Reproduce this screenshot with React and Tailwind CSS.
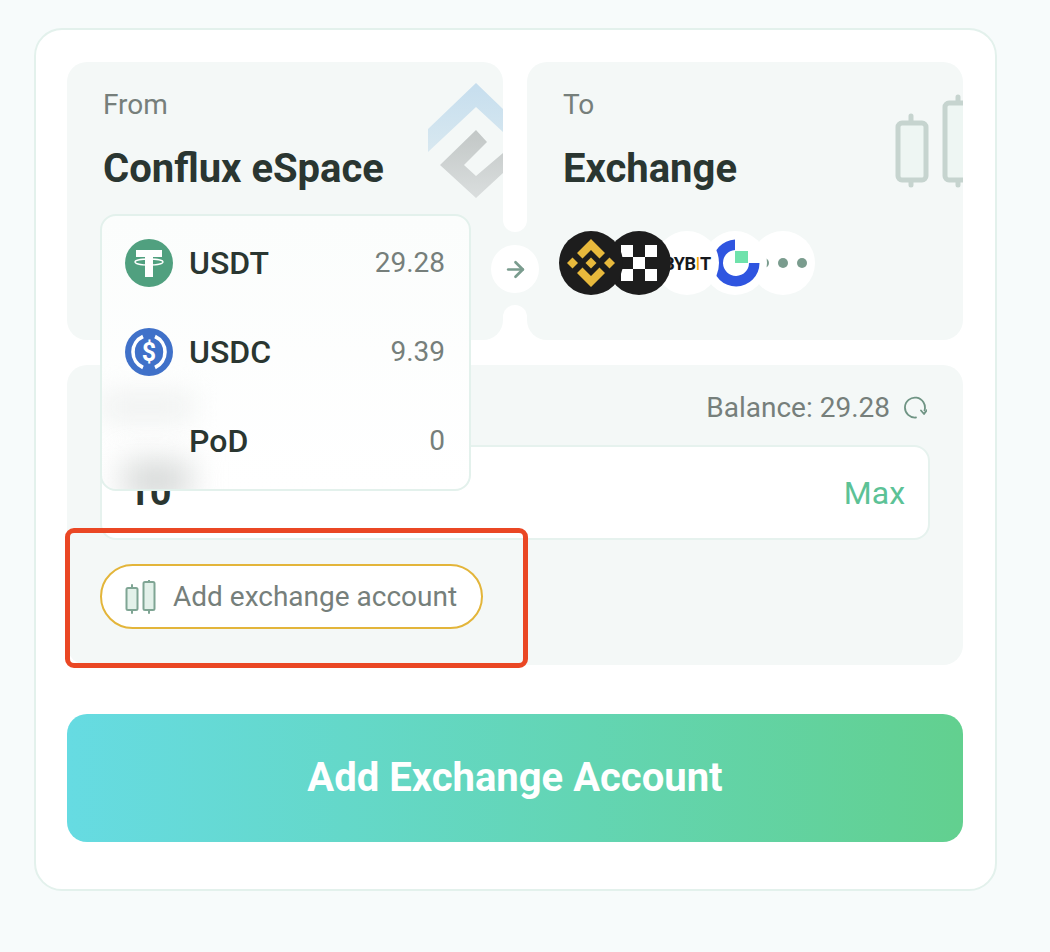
import React from 'react';
import { ArrowRight } from 'lucide-react';

function ConfluxMark() {
  return (
    <svg className="absolute left-[361px] top-[21px]" width="75" height="117" viewBox="0 0 75 117">
      <defs>
        <linearGradient id="cfxBlue" x1="0" y1="0" x2="0" y2="1">
          <stop offset="0" stopColor="#c6deee" />
          <stop offset="1" stopColor="#d8e8f0" />
        </linearGradient>
        <linearGradient id="cfxGrey" x1="0" y1="0" x2="0" y2="1">
          <stop offset="0" stopColor="#c2c7c6" />
          <stop offset="1" stopColor="#dadede" />
        </linearGradient>
      </defs>
      <path d="M48 0 L75 26 L75 49 L48 24 L0 69 L0 46 Z" fill="url(#cfxBlue)" />
      <path d="M48 47 L59 59 L36 82 L48 93 L75 70 L75 90 L48 115 L12 82 Z" fill="url(#cfxGrey)" />
    </svg>
  );
}

function CandleMark() {
  return (
    <svg className="absolute left-[368px] top-[32px]" width="68" height="94" viewBox="0 0 68 94">
      <g fill="#eef6f3" stroke="#c6d4cf" strokeWidth="5" strokeLinecap="round" strokeLinejoin="round">
        <path d="M16 22 V27 M16 86 V91" />
        <rect x="3" y="29" width="28" height="57" rx="4" />
        <path d="M63 3 V7 M63 86 V91" />
        <rect x="50" y="9" width="40" height="77" rx="4" />
      </g>
    </svg>
  );
}

function BinanceIcon() {
  return (
    <div className="w-16 h-16 rounded-full bg-[#1d1d1d] flex items-center justify-center relative z-40 shrink-0">
      <svg width="48" height="48" viewBox="0 0 48 48" fill="#e8b93c">
        <path d="M24 0 L38 14 L32.5 19.5 L24 11 L15.5 19.5 L10 14 Z" />
        <path d="M24 48 L38 34 L32.5 28.5 L24 37 L15.5 28.5 L10 34 Z" />
        <path d="M24 18.5 L29.5 24 L24 29.5 L18.5 24 Z" />
        <path d="M5.5 18.5 L11 24 L5.5 29.5 L0 24 Z" />
        <path d="M42.5 18.5 L48 24 L42.5 29.5 L37 24 Z" />
      </svg>
    </div>
  );
}

function OkxIcon() {
  return (
    <div className="w-16 h-16 rounded-full bg-[#1d1d1d] flex items-center justify-center relative z-30 -ml-4 shrink-0">
      <svg width="36" height="36" viewBox="0 0 36 36" fill="#fff">
        <rect x="0" y="0" width="12" height="12" />
        <rect x="24" y="0" width="12" height="12" />
        <rect x="12" y="12" width="12" height="12" />
        <rect x="0" y="24" width="12" height="12" />
        <rect x="24" y="24" width="12" height="12" />
      </svg>
    </div>
  );
}

function GateIcon() {
  return (
    <div className="w-16 h-16 rounded-full bg-white flex items-center justify-center relative z-10 -ml-4 pl-[2px] shrink-0">
      <svg width="48" height="48" viewBox="0 0 48 48">
        <path d="M23 0.5 A23.5 23.5 0 1 0 47.5 24 H37 A13 13 0 1 1 23 11 Z" fill="#2f55e0" />
        <rect x="23" y="12" width="13" height="12" fill="#6fe2ab" />
      </svg>
    </div>
  );
}

function UsdtIcon() {
  return (
    <svg width="48" height="48" viewBox="0 0 48 48">
      <circle cx="24" cy="24" r="24" fill="#50a07f" />
      <path d="M11 11 H37 V18 H28 V38 H20 V18 H11 Z" fill="#fff" />
      <ellipse cx="24" cy="23" rx="14" ry="3" fill="none" stroke="#fff" strokeWidth="1.3" />
    </svg>
  );
}

function UsdcIcon() {
  return (
    <svg width="48" height="48" viewBox="0 0 48 48">
      <circle cx="24" cy="24" r="24" fill="#4071c9" />
      <path d="M18 8.5 A17 17 0 0 0 18 39.5" fill="none" stroke="#fff" strokeWidth="3.6" />
      <path d="M30 8.5 A17 17 0 0 1 30 39.5" fill="none" stroke="#fff" strokeWidth="3.6" />
      <text x="24" y="33" textAnchor="middle" fontSize="25" fontWeight="700" fill="#fff" fontFamily="Roboto, sans-serif">$</text>
    </svg>
  );
}

function TokenRow({ icon, name, amount }) {
  return (
    <div className="relative h-[89px] flex items-center pl-[23px] pr-[24px]">
      <div className="w-12 h-12 shrink-0">{icon}</div>
      <span className="ml-4 text-[32px] font-medium text-[#2a3631]">{name}</span>
      <span className="ml-auto text-[28px] text-[#767f7b]">{amount}</span>
    </div>
  );
}

export default function App() {
  return (
    <div className="min-h-[952px] bg-[#f7fbfb] pt-[28px] pl-[34px] font-[Roboto,sans-serif]">
      <div className="relative w-[963px] h-[863px] bg-white border-2 border-[#e3f1ec] rounded-[28px] px-[31px] pt-[32px]">
        <div className="relative flex h-[278px]">
          <div className="relative w-[436px] bg-[#f4f8f7] rounded-[20px] pl-9 pt-[25px] overflow-hidden">
            <ConfluxMark />
            <p className="relative text-[28px] leading-9 text-[#767f7b]">From</p>
            <p className="relative mt-[19px] text-[40px] leading-[54px] font-bold text-[#2a3631]">Conflux eSpace</p>
          </div>

          <div className="w-6 flex flex-col bg-[#f4f8f7]">
            <div className="h-[170px] bg-white rounded-b-full" />
            <div className="flex-1" />
            <div className="h-[35px] bg-white rounded-t-full" />
          </div>

          <div className="relative w-[436px] bg-[#f4f8f7] rounded-[20px] pl-9 pt-[25px] overflow-hidden">
            <CandleMark />
            <p className="relative text-[28px] leading-9 text-[#767f7b]">To</p>
            <p className="relative mt-[19px] text-[40px] leading-[54px] font-bold text-[#2a3631]">Exchange</p>
            <div className="flex mt-[35px] -ml-[4px]">
              <BinanceIcon />
              <OkxIcon />
              <div className="w-16 h-16 rounded-full bg-white flex items-center justify-center relative z-20 -ml-4 shrink-0 text-[18px] font-bold text-[#15181c] tracking-tight">
                BYB<span className="text-[#f7a600] font-normal">I</span>T
              </div>
              <GateIcon />
              <div className="w-16 h-16 rounded-full bg-white flex items-center justify-center gap-[9px] -ml-4 shrink-0">
                <span className="w-[10px] h-[10px] rounded-full bg-[#7a9c8e]" />
                <span className="w-[10px] h-[10px] rounded-full bg-[#7a9c8e]" />
                <span className="w-[10px] h-[10px] rounded-full bg-[#7a9c8e]" />
              </div>
            </div>
          </div>

          <div className="absolute left-[424px] top-[183px] w-12 h-12 rounded-full bg-white flex items-center justify-center">
            <ArrowRight size={25} color="#7a9c8e" strokeWidth={2.6} />
          </div>
        </div>

        <div className="relative mt-[25px] h-[300px] w-[896px] bg-[#f4f8f7] rounded-[20px] px-[33px] pt-[25px]">
          <div className="flex items-center justify-end h-[36px] pr-[3px]">
            <div className="flex items-center gap-[13px]">
              <span className="text-[28px] text-[#767f7b]">Balance: 29.28</span>
              <svg width="24" height="24" viewBox="0 0 24 24" fill="none" stroke="#6f9484" strokeWidth="1.8" strokeLinecap="round" strokeLinejoin="round">
                <path d="M13 21.5 A10 10 0 1 1 21.5 14.5" />
                <path d="M18 14.5 L21 18 L24 14" />
              </svg>
            </div>
          </div>
          <div className="mt-[19px] h-[95px] bg-white border-2 border-[#e6f2ee] rounded-[16px] flex items-center pl-[26px] pr-[23px]">
            <span className="text-[38px] font-bold text-[#2a3631]">10</span>
            <span className="ml-auto text-[32px] text-[#5cc296]">Max</span>
          </div>
          <div className="mt-[24px] w-[383px] h-[65px] bg-white border-2 border-[#e3b53a] rounded-full flex items-center pl-[23px]">
            <svg width="32" height="34" viewBox="0 0 32 34" fill="#e3f1ea" stroke="#7fa594" strokeWidth="2" strokeLinecap="round">
              <path d="M7 5 V8 M7 30 V33 M24 0 V2 M24 30 V33" />
              <rect x="1.5" y="8" width="11" height="22" rx="1.5" />
              <rect x="18.5" y="2" width="11" height="28" rx="1.5" />
            </svg>
            <span className="ml-[16px] text-[28px] text-[#767f7b]">Add exchange account</span>
          </div>
          <div className="absolute left-[-2px] top-[163px] w-[463px] h-[140px] border-[5px] border-[#ea4724] rounded-[9px]" />
        </div>

        <div className="mt-[49px] h-[128px] w-[896px] rounded-[20px] bg-gradient-to-r from-[#66dbe2] to-[#62d08f] flex items-center justify-center text-[40px] font-bold text-white">
          Add Exchange Account
        </div>

        <div className="absolute left-[64px] top-[184px] w-[371px] h-[277px] pt-[2px] bg-gradient-to-b from-[#fbfdfc] to-white border-2 border-[#e3f1ec] rounded-[16px]">
          <div className="absolute inset-0 rounded-[14px] overflow-hidden">
            <div className="absolute left-[0px] top-[178px] w-[90px] h-[26px] bg-[#eef0ef] blur-[14px]" />
            <div className="absolute left-[22px] top-[246px] w-[66px] h-[36px] bg-[#d3d6d5] blur-[16px]" />
          </div>
          <TokenRow icon={<UsdtIcon />} name="USDT" amount="29.28" />
          <TokenRow icon={<UsdcIcon />} name="USDC" amount="9.39" />
          <TokenRow icon={null} name="PoD" amount="0" />
        </div>
      </div>
    </div>
  );
}
